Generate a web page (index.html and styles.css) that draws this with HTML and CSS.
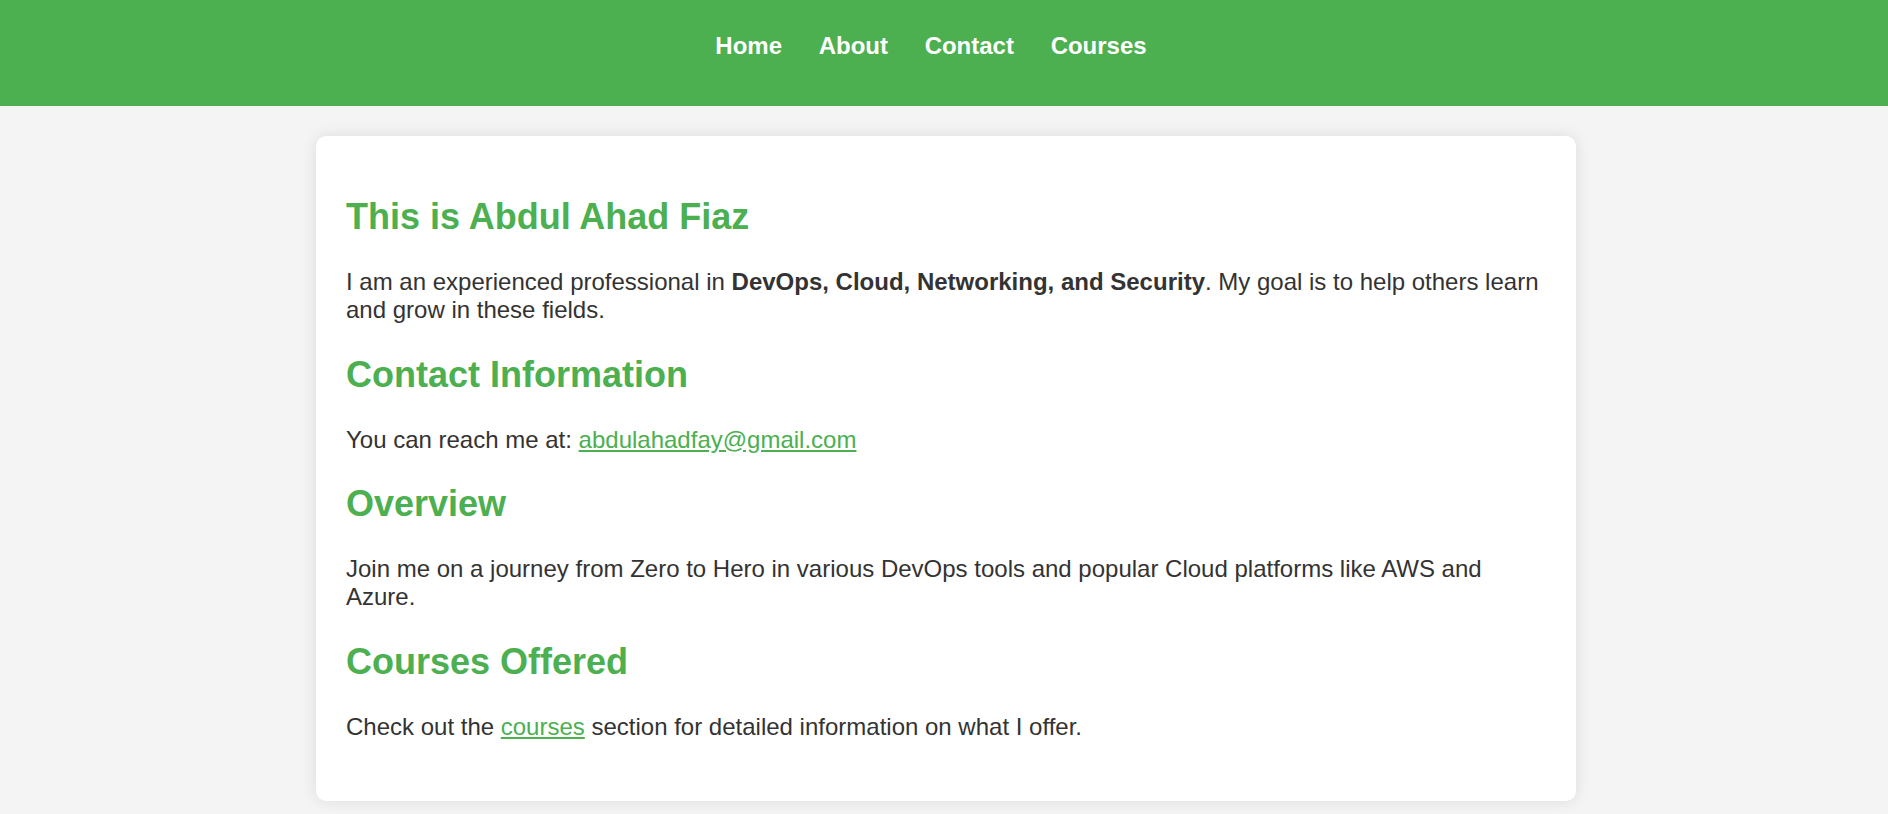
FILE: index.html
```html
<!DOCTYPE html>
<html lang="en">
<head>
<meta charset="utf-8">
<title>Abdul Ahad Fiaz</title>
<link rel="stylesheet" href="styles.css">
</head>
<body>
<header class="site-header">
  <nav>
    <ul class="nav-list">
      <li><a href="#">Home</a></li>
      <li><a href="#">About</a></li>
      <li><a href="#">Contact</a></li>
      <li><a href="#">Courses</a></li>
    </ul>
  </nav>
</header>
<main class="container">
  <h2>This is Abdul Ahad Fiaz</h2>
  <p>I am an experienced professional in <strong>DevOps, Cloud, Networking, and Security</strong>. My goal is to help others learn and grow in these fields.</p>
  <h2>Contact Information</h2>
  <p>You can reach me at: <a href="#">abdulahadfay@gmail.com</a></p>
  <h2>Overview</h2>
  <p>Join me on a journey from Zero to Hero in various DevOps tools and popular Cloud platforms like AWS and Azure.</p>
  <h2>Courses Offered</h2>
  <p>Check out the <a href="#">courses</a> section for detailed information on what I offer.</p>
</main>
</body>
</html>
```
FILE: styles.css
```css
html, body {
  margin: 0;
  padding: 0;
}
body {
  font-family: "Liberation Sans", Arial, sans-serif;
  font-size: 24px;
  line-height: normal;
  color: #333333;
  background: #f4f4f4;
  padding-left: 4px;
}
.site-header {
  background: #4caf50;
  padding: 32px 0 46px;
  margin-left: -4px;
  padding-left: 4px;
}
.nav-list {
  list-style: none;
  margin: 0;
  padding: 0 30px 0 0;
  display: flex;
  justify-content: center;
  gap: 36.67px;
}
.nav-list a {
  color: #ffffff;
  font-weight: bold;
  text-decoration: none;
}
.container {
  max-width: 1200px;
  margin: 30px auto;
  padding: 30px 30px 36px;
  background: #ffffff;
  border-radius: 10px;
  box-shadow: 0 0 15px rgba(0, 0, 0, 0.1);
}
.container h2 {
  color: #4caf50;
  font-size: 36px;
  margin: 29.88px 0;
}
.container p {
  margin: 24px 0;
}
.container a {
  color: #4caf50;
}
```
